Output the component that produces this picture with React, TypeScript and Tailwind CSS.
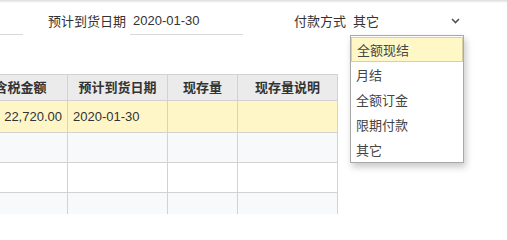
import React from "react";

const font = { fontFamily: '"Liberation Sans", "Noto Sans CJK SC", sans-serif' };

export default function App() {
  const options = ["全额现结", "月结", "全额订金", "限期付款", "其它"];
  const rowBg = ["bg-[#fff6c8]", "bg-[#f8f9fb]", "bg-white", "bg-[#f8f9fb]"];
  const rowH = ["h-[32px]", "h-[30px]", "h-[30px]", "h-[30px]"];
  return (
    <div className="relative w-[507px] h-[214px] overflow-hidden bg-white text-[#333]" style={font}>
      <div className="h-[3px] bg-gradient-to-b from-[#dcdcdc] to-white" />
      <div className="flex items-end h-[32px] text-[13px] leading-[16px]">
        <div className="w-[23px] h-full border-b border-[#d9d9d9]" />
        <div className="ml-[25px] w-[82px] pb-[5px] whitespace-nowrap">预计到货日期</div>
        <div className="w-[113px] h-full flex items-end pb-[5px] pl-[3px] border-b border-[#d9d9d9]">2020-01-30</div>
        <div className="ml-[51px] w-[56px] pb-[5px] whitespace-nowrap">付款方式</div>
        <div className="relative w-[114px] h-full flex items-end pb-[5px] pl-[3px]">
          其它
          <svg className="absolute right-[4px] top-[15px]" width="9" height="6" viewBox="0 0 9 6">
            <path d="M1 1 L4.5 4.5 L8 1" fill="none" stroke="#555" strokeWidth="1.6" />
          </svg>
        </div>
      </div>
      <div className="mt-[39px] -ml-[26px] w-[364px] text-[13px]">
        <div className="grid grid-cols-[94px_100px_70px_100px] h-[27px] bg-[#ebebeb] border-t border-b border-[#d2d2d2] font-bold">
          {["含税金额", "预计到货日期", "现存量", "现存量说明"].map((h) => (
            <div key={h} className="flex items-center justify-center border-r border-[#d2d2d2]">{h}</div>
          ))}
        </div>
        {rowBg.map((bg, i) => (
          <div key={i} className={`grid grid-cols-[94px_100px_70px_100px] ${rowH[i]} ${bg} border-b border-[#d2d2d2]`}>
            <div className="flex items-center justify-end pr-[5px] border-r border-[#d2d2d2]">{i === 0 ? "22,720.00" : ""}</div>
            <div className="flex items-center pl-[5px] border-r border-[#d2d2d2]">{i === 0 ? "2020-01-30" : ""}</div>
            <div className="border-r border-[#d2d2d2]" />
            <div className="border-r border-[#d2d2d2]" />
          </div>
        ))}
      </div>
      <div className="absolute left-[350px] top-[35px] w-[114px] h-[128px] bg-white border border-[#a9a9a9] pt-[1px] shadow-[2px_4px_7px_rgba(0,0,0,0.22)] text-[13px] text-[#444]">
        {options.map((o, i) => (
          <div
            key={o}
            className={`h-[25px] flex items-center pl-[5px] pt-[2px] ${i === 0 ? "bg-[#fff8c6] border border-[#d6d0a8] pl-[4px]" : ""}`}
          >
            {o}
          </div>
        ))}
      </div>
    </div>
  );
}
